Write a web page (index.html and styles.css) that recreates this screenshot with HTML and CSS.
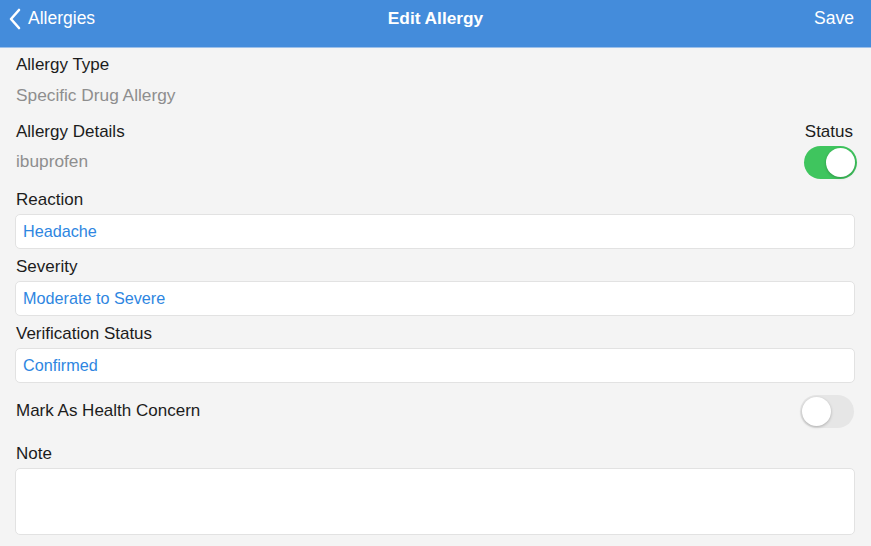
FILE: index.html
```html
<!DOCTYPE html>
<html>
<head>
<meta charset="utf-8">
<link rel="stylesheet" href="styles.css">
</head>
<body>
<header class="navbar">
  <div class="nav-left">
    <svg class="chevron" width="14" height="22" viewBox="0 0 14 22"><path d="M11 2 L3 11 L11 20" fill="none" stroke="#fff" stroke-width="2.6" stroke-linecap="round" stroke-linejoin="round"/></svg>
    <span>Allergies</span>
  </div>
  <div class="nav-title">Edit Allergy</div>
  <div class="nav-right">Save</div>
</header>
<main class="content">
  <section class="info">
    <div class="label">Allergy Type</div>
    <div class="value">Specific Drug Allergy</div>
  </section>
  <section class="info details">
    <div class="details-left">
      <div class="label">Allergy Details</div>
      <div class="value">ibuprofen</div>
    </div>
    <div class="details-right">
      <div class="label">Status</div>
      <div class="switch on"><span class="knob"></span></div>
    </div>
  </section>
  <section class="field">
    <div class="label">Reaction</div>
    <div class="input">Headache</div>
  </section>
  <section class="field">
    <div class="label">Severity</div>
    <div class="input">Moderate to Severe</div>
  </section>
  <section class="field">
    <div class="label">Verification Status</div>
    <div class="input">Confirmed</div>
  </section>
  <section class="concern">
    <div class="label">Mark As Health Concern</div>
    <div class="switch off"><span class="knob"></span></div>
  </section>
  <section class="note">
    <div class="label">Note</div>
    <div class="textarea"></div>
  </section>
</main>
</body>
</html>
```

FILE: styles.css
```css
* { box-sizing: border-box; }
html, body {
  margin: 0;
  padding: 0;
  background: #f4f4f4;
  font-family: "Liberation Sans", Arial, sans-serif;
  -webkit-font-smoothing: antialiased;
}
.navbar {
  height: 48px;
  background: #448cdb;
  border-bottom: 1px solid #9cc0ea;
  color: #fff;
  display: grid;
  grid-template-columns: 1fr auto 1fr;
  align-items: center;
  font-size: 17.5px;
  padding: 0 17px 10px 17px;
}
.nav-left {
  display: flex;
  align-items: center;
  gap: 6px;
  margin-left: -9px;
}
.chevron { display: block; margin-top: 1px; }
.nav-title {
  font-weight: bold;
  font-size: 17.3px;
  text-align: center;
}
.nav-right {
  text-align: right;
}
.content {
  padding: 7px 16px 0 15px;
}
.label {
  font-size: 17px;
  line-height: 20px;
  color: #1c1c1c;
  padding-left: 1px;
}
.value {
  font-size: 17.3px;
  line-height: 20px;
  color: #8e8e8e;
  padding-left: 1px;
}
.info .value { margin-top: 10px; }
.details {
  margin-top: 17px;
  display: flex;
  justify-content: space-between;
}
.details .value { margin-top: 9px; }
.details-right {
  display: flex;
  flex-direction: column;
  align-items: flex-end;
  margin-right: -2px;
}
.details-right .label { margin-right: 4px; }
.details-right .switch { margin-top: 4px; }
.switch {
  width: 53px;
  height: 33px;
  border-radius: 17px;
  position: relative;
}
.switch.on { background: #3fc55e; }
.switch.off { background: #e6e6e6; }
.knob {
  position: absolute;
  top: 2px;
  width: 29px;
  height: 29px;
  border-radius: 50%;
  background: #fff;
  box-shadow: 0 1px 3px rgba(0,0,0,0.25);
}
.switch.on .knob { right: 2px; }
.switch.off .knob { left: 2px; }
.field {
  margin-top: 11px;
}
.field + .field { margin-top: 8px; }
.input {
  margin-top: 4px;
  height: 35px;
  background: #fff;
  border: 1px solid #e2e2e2;
  border-radius: 5px;
  padding: 0 7px;
  display: flex;
  align-items: center;
  color: #2e86e1;
  font-size: 16.2px;
}
.concern {
  margin-top: 12px;
  display: flex;
  justify-content: space-between;
  align-items: center;
  height: 33px;
}
.concern .label { margin-top: -1px; }
.concern .switch { width: 54px; margin-right: 1px; }
.note {
  margin-top: 16px;
}
.textarea {
  margin-top: 4px;
  height: 67px;
  background: #fff;
  border: 1px solid #e2e2e2;
  border-radius: 5px;
}
```
